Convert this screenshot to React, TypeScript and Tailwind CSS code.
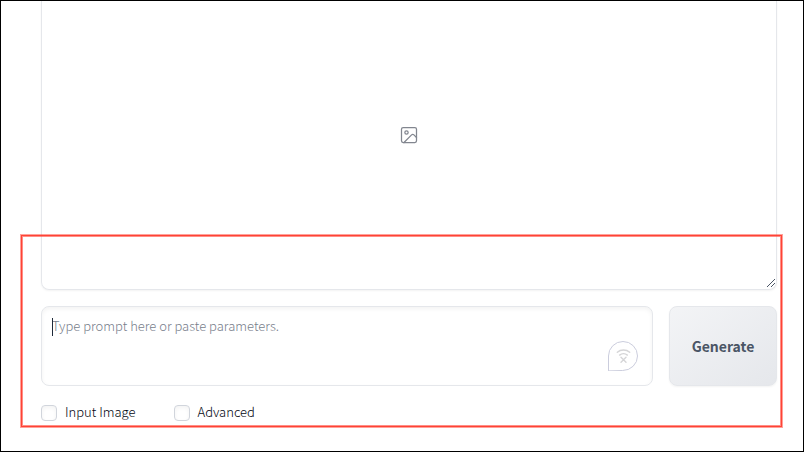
import { Image } from "lucide-react";

function ResizeHandle() {
  return (
    <svg
      className="absolute bottom-px right-0 size-[10px] text-gray-600"
      viewBox="0 0 10 10"
      fill="none"
      stroke="currentColor"
      aria-hidden="true"
    >
      <path d="M1 9l8-8M5 9l4-4" strokeWidth="1" />
    </svg>
  );
}

function OfflineBadge() {
  return (
    <svg
      className="absolute bottom-[15px] right-[15px] size-[30px]"
      viewBox="0 0 30 30"
      fill="none"
      strokeLinecap="round"
      aria-hidden="true"
    >
      <path d="M.5 29.5V15a14.5 14.5 0 1 1 14.5 14.5z" stroke="#cbcddd" />
      <g stroke="#d5d5d7" strokeWidth="1.4">
        <path d="M9.3 11.3c3.5-3 8.9-3 12.4 0" />
        <path d="M11.6 14.1c2.2-1.9 5.6-1.9 7.8 0" />
        <path d="M13 16.3l5 5M18 16.3l-5 5" />
      </g>
    </svg>
  );
}

function Option({ id, label }: { id: string; label: string }) {
  return (
    <div className="flex items-center gap-2">
      <input
        id={id}
        type="checkbox"
        className="size-4 appearance-none rounded-sm border border-gray-300 bg-white shadow-[inset_0_2px_4px_0_rgba(0,0,0,0.05)] checked:bg-gray-500"
      />
      <label htmlFor={id} className="pb-0.5 text-[13px] font-light leading-[18px] text-gray-950">
        {label}
      </label>
    </div>
  );
}

export default function App() {
  return (
    <main className="min-h-screen border border-black bg-white pl-10 pr-[26px] font-['Noto_Sans_CJK_SC',sans-serif]">
      <div className="relative pb-1">
        <section
          aria-label="Gallery"
          className="relative flex h-[289px] items-center justify-center rounded-b-lg border border-t-0 border-gray-200 pb-5 shadow-[0_1px_2px_0_rgba(0,0,0,0.05)]"
        >
          <Image className="size-5 text-[#82868f]" strokeWidth={1.5} />
          <ResizeHandle />
        </section>

        <div className="mt-4 flex gap-4">
          <div className="relative flex-1">
            <textarea
              aria-label="Prompt"
              placeholder="Type prompt here or paste parameters."
              className="block h-20 w-full resize-none rounded-lg border border-gray-200 bg-white px-[10px] py-[9px] text-[13px] font-light leading-5 text-gray-800 shadow-[inset_0_2px_4px_0_rgba(0,0,0,0.05)] outline-none placeholder:text-[#787e8b]"
            />
            <span className="absolute left-[11px] top-3 h-[18px] w-px bg-gray-800" />
            <OfflineBadge />
          </div>
          <button
            type="button"
            className="w-[108px] rounded-lg border border-gray-200 bg-linear-to-br from-gray-100 to-gray-200 text-sm font-semibold text-gray-600 shadow-[0_1px_2px_0_rgba(0,0,0,0.05)]"
          >
            Generate
          </button>
        </div>

        <div className="mt-[17px] flex gap-[38px]">
          <Option id="input-image" label="Input Image" />
          <Option id="advanced" label="Advanced" />
        </div>

        <div className="pointer-events-none absolute -left-5 -right-[5px] bottom-0 top-[234px] border border-[#ff4335] shadow-[0_0_0_1px_rgba(255,67,53,0.5),inset_0_0_0_1px_rgba(255,67,53,0.6)]" />
      </div>
    </main>
  );
}
